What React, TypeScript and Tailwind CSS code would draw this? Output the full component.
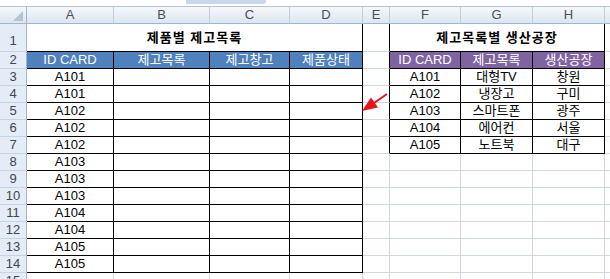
import React from "react";

const COLS = ["A", "B", "C", "D", "E", "F", "G", "H", ""];

const left: Record<number, string> = {
  3: "A101", 4: "A101", 5: "A102", 6: "A102", 7: "A102", 8: "A103",
  9: "A103", 10: "A103", 11: "A104", 12: "A104", 13: "A105", 14: "A105",
};

const right: Record<number, [string, string, string]> = {
  3: ["A101", "대형TV", "창원"],
  4: ["A102", "냉장고", "구미"],
  5: ["A103", "스마트폰", "광주"],
  6: ["A104", "에어컨", "서울"],
  7: ["A105", "노트북", "대구"],
};

// bordered ranges: A1:D14 and F1:H7
const boxed = (r: number, c: number) =>
  (r >= 1 && r <= 14 && c >= 1 && c <= 4) || (r >= 1 && r <= 7 && c >= 6 && c <= 8);

function edges(r: number, c: number) {
  const rb = boxed(r, c) || boxed(r, c + 1) ? "border-r-black" : "border-r-[#d0d7e5]";
  const bb = boxed(r, c) || boxed(r + 1, c) ? "border-b-black" : "border-b-[#d0d7e5]";
  return `border-r border-b ${rb} ${bb}`;
}

function RowHead({ n, tall }: { n: number; tall?: boolean }) {
  return (
    <div
      className={`flex justify-center bg-[#e4ecf7] border-r border-b border-r-[#9eb6ce] border-b-[#c5d3e3] text-[#3f4650] ${
        tall ? "h-[28px] items-end pb-[1px]" : "h-[17px] items-center"
      }`}
    >
      {n}
    </div>
  );
}

function Row({ r }: { r: number }) {
  const cells = [];
  for (let c = 1; c <= 9; c++) {
    let content: React.ReactNode = null;
    let tone = "";
    if (r === 2 && c <= 4) tone = "bg-[#4f81bd] text-white";
    if (r === 2 && c >= 6 && c <= 8) tone = "bg-[#8064a2] text-white";
    if (r === 2) {
      if (c === 1 || c === 6) content = "ID CARD";
      if (c === 2) content = "제고목록";
      if (c === 3) content = "제고창고";
      if (c === 4) content = "제품상태";
      if (c === 7) content = "제고목록";
      if (c === 8) content = "생산공장";
    }
    if (c === 1 && left[r]) content = left[r];
    if (c >= 6 && c <= 8 && right[r]) content = right[r][c - 6];
    cells.push(
      <div key={c} className={`h-[17px] flex items-center justify-center ${edges(r, c)} ${tone}`}>
        {content}
      </div>
    );
  }
  return (
    <>
      <RowHead n={r} />
      {cells}
    </>
  );
}

export default function App() {
  const rows = [];
  for (let r = 2; r <= 15; r++) rows.push(<Row key={r} r={r} />);

  return (
    <div className="relative w-[610px] h-[279px] overflow-hidden bg-white text-[13px] text-black [font-family:'Liberation_Sans','Noto_Sans_CJK_KR',sans-serif]">
      {/* top edge of the formula bar */}
      <div className="h-[7px] flex border-b border-[#b4c2d4]">
        <div className="w-[186px]" />
        <div className="w-[80px] h-[4px] bg-[#c7d8ee] rounded-br-[3px]" />
      </div>

      <div className="grid grid-cols-[27px_87px_96px_80px_73px_27px_71px_72px_72px_60px]">
        {/* column headers */}
        <div className="h-[17px] relative bg-linear-to-b from-[#f6f8fb] to-[#dde5ef] border-r border-b border-[#9eb6ce]">
          <svg width="10" height="10" className="absolute right-[3px] bottom-[2px]">
            <polygon points="10,0 10,10 0,10" fill="#b4c3d6" />
          </svg>
        </div>
        {COLS.map((l, i) => (
          <div
            key={i}
            className="h-[17px] flex items-center justify-center bg-linear-to-b from-[#f6f8fb] to-[#dde5ef] border-r border-b border-r-[#c0cddc] border-b-[#9eb6ce] text-[#4a4f57]"
          >
            {l}
          </div>
        ))}

        {/* row 1: titles */}
        <RowHead n={1} tall />
        <div className={`col-span-4 h-[28px] flex items-center justify-center font-bold tracking-[1px] ${edges(1, 4)}`}>
          제품별 제고목록
        </div>
        <div className={`h-[28px] ${edges(1, 5)}`} />
        <div className={`col-span-3 h-[28px] flex items-center justify-center font-bold tracking-[1px] ${edges(1, 8)}`}>
          제고목록별 생산공장
        </div>
        <div className={`h-[28px] ${edges(1, 9)}`} />

        {rows}
      </div>

      {/* red arrow pointing at the table */}
      <svg className="absolute left-0 top-0 pointer-events-none" width="610" height="279">
        <line x1="387" y1="94" x2="374" y2="103" stroke="#e8141b" strokeWidth="2" />
        <polygon points="362,111 371,97.6 378,107.6" fill="#e8141b" />
      </svg>
    </div>
  );
}
